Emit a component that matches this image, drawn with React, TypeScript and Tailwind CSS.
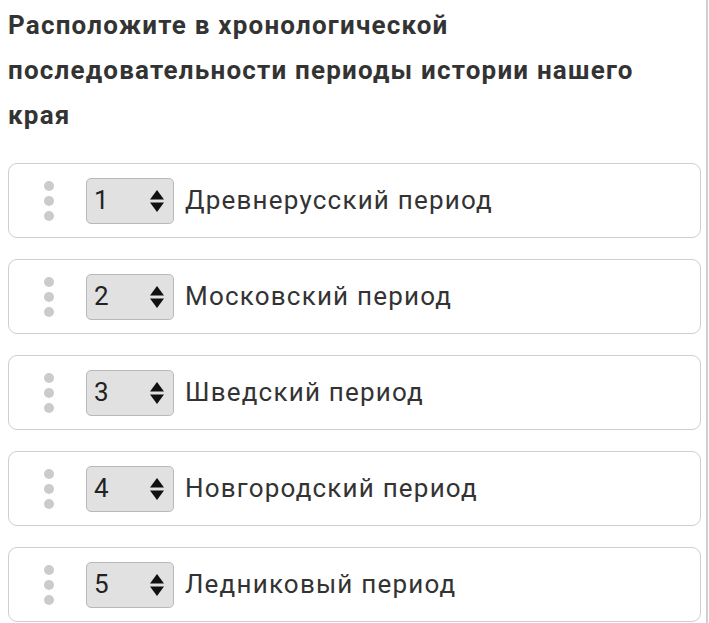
const ITEMS = [
  { n: 1, label: "Древнерусский период" },
  { n: 2, label: "Московский период" },
  { n: 3, label: "Шведский период" },
  { n: 4, label: "Новгородский период" },
  { n: 5, label: "Ледниковый период" },
];

// up/down caret like the native select arrow
function Caret() {
  return (
    <svg width="14" height="22" viewBox="0 0 14 22" className="shrink-0">
      <path d="M7 0 L14 9.5 L0 9.5 Z" fill="#111" />
      <path d="M7 22 L14 12.5 L0 12.5 Z" fill="#111" />
    </svg>
  );
}

function Row({ n, label }: { n: number; label: string }) {
  return (
    <div className="flex items-center h-[75px] rounded-[9px] border border-[#cfcfcf] bg-white">
      <div className="flex flex-col gap-[5px] ml-[35px]">
        <span className="block w-[10px] h-[10px] rounded-full bg-[#cbcbcb]" />
        <span className="block w-[10px] h-[10px] rounded-full bg-[#cbcbcb]" />
        <span className="block w-[10px] h-[10px] rounded-full bg-[#cbcbcb]" />
      </div>
      <div className="ml-[32px] flex items-center justify-between w-[88px] h-[46px] pl-[7px] pr-[9px] rounded-[5px] border border-[#b9b9b9] bg-[#e1e1e1]">
        <span className="text-[26px] text-[#222]">{n}</span>
        <Caret />
      </div>
      <span className="ml-[11px] text-[26px] tracking-[1.2px] text-[#333]">{label}</span>
    </div>
  );
}

export default function App() {
  return (
    <div className="w-[709px] h-[623px] bg-white overflow-hidden" style={{ fontFamily: "Roboto, 'Liberation Sans', sans-serif" }}>
      <div className="w-[708px] h-full border-r-2 border-[#cfcfcf] pl-2 pr-[5px]">
        <h1 className="pt-[3px] max-w-[670px] text-[26px] leading-[45px] tracking-[1.2px] font-bold text-[#333]">
          Расположите в хронологической последовательности периоды истории нашего края
        </h1>
        <div className="mt-[25px] flex flex-col gap-[21px]">
          {ITEMS.map((it) => (
            <Row key={it.n} n={it.n} label={it.label} />
          ))}
        </div>
      </div>
    </div>
  );
}
